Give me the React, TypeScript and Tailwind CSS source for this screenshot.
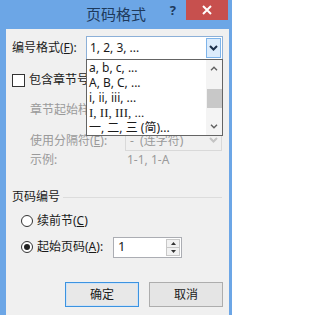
import React from 'react';

const Chevron = ({ color }: { color: string }) => (
  <svg width="9" height="6" viewBox="0 0 9 6">
    <path d="M1 1l3.5 3.5L8 1" fill="none" stroke={color} strokeWidth="2" />
  </svg>
);

const SmallArrow = ({ up }: { up?: boolean }) => (
  <svg width="8" height="5" viewBox="0 0 8 5">
    <path d={up ? 'M1 4.2l3-3 3 3' : 'M1 0.8l3 3 3-3'} fill="none" stroke="#606060" strokeWidth="1.4" />
  </svg>
);

const Triangle = ({ up }: { up?: boolean }) => (
  <svg width="5" height="3" viewBox="0 0 5 3">
    <path d={up ? 'M0 3h5L2.5 0z' : 'M0 0h5L2.5 3z'} fill="#333" />
  </svg>
);

const formats = ['a, b, c, ...', 'A, B, C, ...', 'i, ii, iii, ...'];

export default function App() {
  return (
    <div className="flex h-[315px] w-[232px] flex-col bg-[#6ca6e6] font-['Noto_Sans','Noto_Sans_CJK_SC',sans-serif] text-[12px] text-[#1a1a1a]">
      {/* title bar */}
      <div className="flex h-[29px] shrink-0">
        <div className="flex-1 basis-0" />
        <div className="pt-[3px] text-[15px] leading-[22px] text-[#1e3a5c]">页码格式</div>
        <div className="flex flex-1 basis-0 justify-end">
          <span className="mr-[10px] pt-[1px] text-[13px] font-bold leading-[18px] text-[#1e3a5c]">?</span>
          <div className="mr-[4px] flex h-[20px] w-[42px] items-center justify-center bg-[#c7504e]">
            <svg width="10" height="10" viewBox="0 0 10 10">
              <path d="M1 1l8 8M9 1l-8 8" stroke="#fff" strokeWidth="2" />
            </svg>
          </div>
        </div>
      </div>

      {/* body */}
      <div className="relative ml-[6px] mr-[3px] flex flex-1 flex-col bg-[#f0f0f0] px-[6px]">
        <div className="mt-[7px] flex h-[24px] items-center">
          <span className="w-[74px]">
            编号格式(<u>F</u>):
          </span>
          <div className="flex h-full flex-1 items-center border border-[#8cb0d8] bg-white">
            <span className="flex-1 pl-[3px]">1, 2, 3, ...</span>
            <div className="m-[1px] flex w-[15px] items-center justify-center self-stretch border border-[#7eb4ea] bg-[#dcecfc]">
              <Chevron color="#1c2f4a" />
            </div>
          </div>
        </div>

        {/* labels below are cut where the open list covers them */}
        <div className="mt-[10px] flex h-[20px] items-center">
          <div className="h-[13px] w-[13px] border border-[#333] bg-white" />
          <span className="ml-[4px] w-[57px] overflow-hidden whitespace-nowrap">包含章节号(N)</span>
        </div>

        <div className="mt-[10px] flex h-[20px] items-center pl-[18px]">
          <span className="w-[56px] overflow-hidden whitespace-nowrap text-[#9a9a9a]">章节起始样式(P):</span>
        </div>

        <div className="mt-[9px] flex h-[22px] items-center pl-[18px]">
          <span className="w-[95px] leading-[13px] text-[#9a9a9a]">
            使用分隔符(<u>E</u>):
          </span>
          <div className="mr-[1px] flex h-full flex-1 items-center border border-[#d9d9d9] bg-[#f0f0f0]">
            <span className="flex-1 pl-[4px] leading-[13px] text-[#9a9a9a]">-&nbsp;&nbsp;(连字符)</span>
            <div className="flex w-[15px] items-center justify-center self-stretch">
              <Chevron color="#c4c4c4" />
            </div>
          </div>
        </div>

        <div className="flex h-[18px] items-center pl-[18px] text-[#9a9a9a]">
          <span className="w-[97px]">示例:</span>
          <span>1-1, 1-A</span>
        </div>

        <div className="mt-[19px] flex h-[18px] items-center">
          <span>页码编号</span>
          <div className="ml-[3px] mr-[1px] h-px flex-1 bg-[#dcdcdc]" />
        </div>

        <div className="mt-[6px] flex h-[18px] items-center pl-[9px]">
          <div className="h-[12px] w-[12px] rounded-full border border-[#333] bg-white" />
          <span className="ml-[4px]">
            续前节(<u>C</u>)
          </span>
        </div>

        <div className="mt-[6px] flex h-[22px] items-center pl-[9px]">
          <div className="flex h-[12px] w-[12px] items-center justify-center rounded-full border border-[#333] bg-white">
            <div className="h-[6px] w-[6px] rounded-full bg-[#222]" />
          </div>
          <span className="ml-[4px] w-[76px]">
            起始页码(<u>A</u>):
          </span>
          <div className="flex h-[21px] w-[69px] items-center border border-[#abadb3] bg-white">
            <span className="flex-1 pl-[4px] text-[13px]">1</span>
            <div className="my-[1px] mr-[1px] flex w-[14px] flex-col self-stretch border border-[#c8c8c8] bg-[#f2f2f2]">
              <div className="flex flex-1 items-center justify-center border-b border-[#c8c8c8]">
                <Triangle up />
              </div>
              <div className="flex flex-1 items-center justify-center">
                <Triangle />
              </div>
            </div>
          </div>
        </div>

        <div className="mt-[24px] flex h-[25px] justify-end gap-[10px]">
          <div className="flex w-[74px] items-center justify-center border border-[#3c93e0] bg-[#e8e8e8] shadow-[inset_0_0_0_1px_#cfe3f7]">
            确定
          </div>
          <div className="flex w-[74px] items-center justify-center border border-[#adadad] bg-[#e5e5e5]">
            取消
          </div>
        </div>

        {/* open dropdown list */}
        <div className="absolute left-[80px] top-[30px] flex h-[77px] w-[137px] border border-[#646464] bg-white">
          <div className="flex-1">
            {formats.map((f) => (
              <div key={f} className="h-[15px] pl-[2px] leading-[15px]">
                {f}
              </div>
            ))}
            <div className="h-[15px] pl-[2px] leading-[15px]">
              <span className="font-['Liberation_Serif',serif] text-[13px]">I, II, III, ...</span>
            </div>
            <div className="h-[15px] pl-[2px] leading-[15px]">一, 二, 三 (简)...</div>
          </div>
          <div className="flex w-[16px] flex-col items-center bg-[#f4f4f4]">
            <div className="flex h-[17px] items-center justify-center">
              <SmallArrow up />
            </div>
            <div className="mt-[12px] h-[19px] w-[15px] bg-[#c8c8c8]" />
            <div className="flex-1" />
            <div className="flex h-[17px] items-center justify-center">
              <SmallArrow />
            </div>
          </div>
        </div>
      </div>
    </div>
  );
}
